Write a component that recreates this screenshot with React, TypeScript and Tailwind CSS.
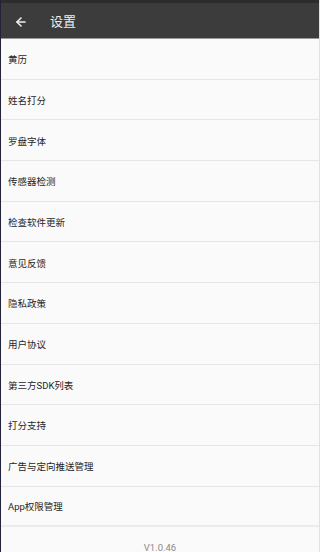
import React from "react";
import { ArrowLeft } from "lucide-react";

const items = [
  "黄历",
  "姓名打分",
  "罗盘字体",
  "传感器检测",
  "检查软件更新",
  "意见反馈",
  "隐私政策",
  "用户协议",
  "第三方SDK列表",
  "打分支持",
  "广告与定向推送管理",
  "App权限管理",
];

export default function App() {
  return (
    <div
      className="w-[320px] h-[552px] overflow-hidden bg-[#fafafa] flex flex-col border-l border-[#22223a] border-r border-r-[#e2e2e2]"
      style={{ fontFamily: '"Roboto", "Noto Sans CJK SC", sans-serif' }}
    >
      <div className="shrink-0 h-[39px] bg-[#3c3c3c] flex flex-col border-b border-[#9a9a9a]">
        <div className="h-[3px] bg-[#2c2c2c]" />
        <div className="flex-1 flex items-center pt-[2px]">
          <ArrowLeft className="ml-[13px] text-[#f0f0f0]" size={14} strokeWidth={2.6} />
          <span className="ml-[22px] text-[13px] text-[#eeeeee]">设置</span>
        </div>
      </div>
      {items.map((t, i) => (
        <div
          key={t}
          className={
            "shrink-0 h-[40.7px] flex items-center pl-[7px] pt-[3px] text-[9.5px] text-[#262626] " +
            (i === items.length - 1 ? "border-b-2 border-[#ececec]" : "border-b border-[#e6e6e6]")
          }
        >
          {t}
        </div>
      ))}
      <div className="flex justify-center pt-[14px] text-[9.5px] text-[#8a8a8a]">V1.0.46</div>
    </div>
  );
}
